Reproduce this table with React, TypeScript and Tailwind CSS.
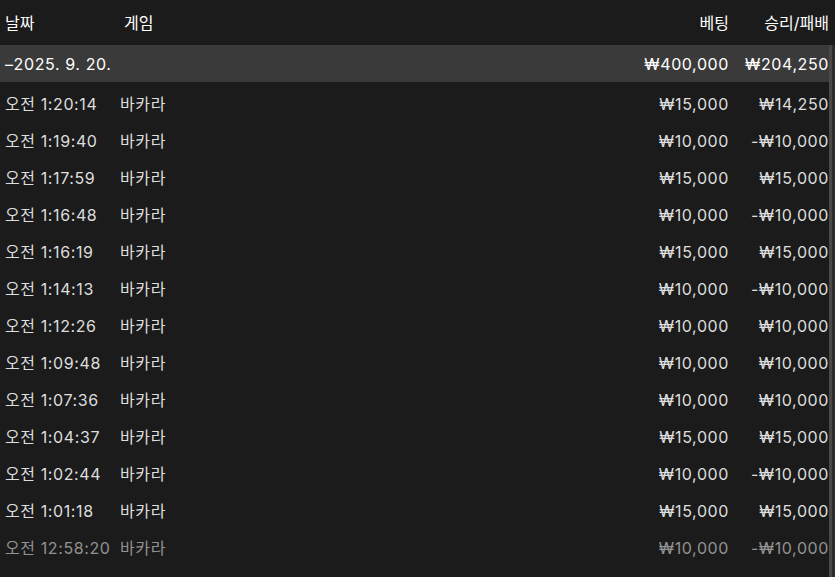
const rows: [string, string, string][] = [
  ['오전 1:20:14', '₩15,000', '₩14,250'],
  ['오전 1:19:40', '₩10,000', '-₩10,000'],
  ['오전 1:17:59', '₩15,000', '₩15,000'],
  ['오전 1:16:48', '₩10,000', '-₩10,000'],
  ['오전 1:16:19', '₩15,000', '₩15,000'],
  ['오전 1:14:13', '₩10,000', '-₩10,000'],
  ['오전 1:12:26', '₩10,000', '₩10,000'],
  ['오전 1:09:48', '₩10,000', '₩10,000'],
  ['오전 1:07:36', '₩10,000', '₩10,000'],
  ['오전 1:04:37', '₩15,000', '₩15,000'],
  ['오전 1:02:44', '₩10,000', '-₩10,000'],
  ['오전 1:01:18', '₩15,000', '₩15,000'],
  ['오전 12:58:20', '₩10,000', '-₩10,000'],
];

export default function App() {
  return (
    <div
      className="w-[835px] h-[577px] overflow-hidden bg-[#1b1b1b] text-[16px] tracking-[0.6px] flex flex-col"
      style={{ fontFamily: 'Inter, "Noto Sans CJK KR", sans-serif' }}
    >
      <div className="h-[45px] shrink-0 flex items-center text-white pr-[6px] tracking-normal">
        <div className="w-[124px] pl-[5px]">날짜</div>
        <div className="flex-1">게임</div>
        <div className="w-[110px] text-right">베팅</div>
        <div className="w-[100px] text-right">승리/패배</div>
      </div>

      <div className="flex flex-1 min-h-0">
        <div className="flex-1 flex flex-col">
          <div className="h-[37px] shrink-0 flex items-center bg-[#3a3a3a] text-white">
            <div className="flex-1 pl-[5px]">–2025. 9. 20.</div>
            <div className="w-[110px] text-right">₩400,000</div>
            <div className="w-[100px] text-right">₩204,250</div>
          </div>
          <div className="mt-[3px] flex flex-col">
            {rows.map(([time, bet, result], i) => (
              <div
                key={time}
                className={
                  'h-[37px] shrink-0 flex items-center ' +
                  (i === rows.length - 1 ? 'text-[#929292]' : 'text-[#dedede]')
                }
              >
                <div className="w-[120px] pl-[5px]">{time}</div>
                <div className="flex-1">바카라</div>
                <div className="w-[110px] text-right">{bet}</div>
                <div className="w-[100px] text-right">{result}</div>
              </div>
            ))}
          </div>
        </div>
        <div className="w-[6px] shrink-0 flex">
          <div className="w-[3px] bg-[#484848]" />
          <div className="w-[3px] bg-[#2c2c2c]" />
        </div>
      </div>
    </div>
  );
}
